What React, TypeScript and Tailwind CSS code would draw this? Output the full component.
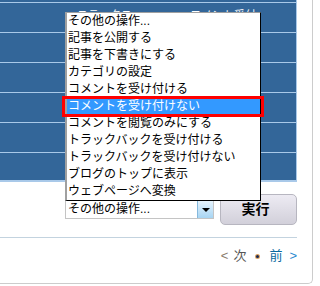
const menuItems = [
  'その他の操作...',
  '記事を公開する',
  '記事を下書きにする',
  'カテゴリの設定',
  'コメントを受け付ける',
  'コメントを受け付けない',
  'コメントを閲覧のみにする',
  'トラックバックを受け付ける',
  'トラックバックを受け付けない',
  'ブログのトップに表示',
  'ウェブページへ変換',
];

const SELECTED = 5;

export default function App() {
  return (
    <div className="relative w-[320px] h-[286px] overflow-hidden bg-white font-['Liberation_Sans','Noto_Sans_CJK_JP',sans-serif] text-black">
      <div className="w-[313px] h-[284px] border-r border-b border-[#cccccc] rounded-br-[5px]">
        <div className="w-[297px]">
          {/* entry table */}
          <div className="bg-[#336699] border-r border-[#a9c9e9] pt-[2px]">
            <div className="h-[30px] border-t border-[#a9c9e9] flex pt-[4px] text-[11px] text-white">
              <span className="ml-[77px]">ステータス</span>
              <span className="ml-[58px]">コメント受付</span>
            </div>
            <div className="h-[30px] border-t border-[#a9c9e9]" />
            <div className="h-[30px] border-t border-[#a9c9e9]" />
            <div className="h-[30px] border-t border-[#a9c9e9]" />
            <div className="h-[30px] border-t border-[#a9c9e9]" />
            <div className="h-[30px] border-t border-b-2 border-[#a9c9e9]" />
          </div>

          {/* bulk action */}
          <div className="flex items-center justify-end gap-[6px] mt-[12px]">
            <div className="flex w-[149px] h-[19px] border border-[#c4c4c4] bg-white">
              <span className="flex-1 pl-[2px] text-[12px] leading-[17px]">その他の操作...</span>
              <div className="w-[16px] h-full flex items-center justify-center border-l border-[#86b9dd] bg-linear-to-b from-[#e6f3fc] to-[#a7d5f3]">
                <div className="w-0 h-0 border-l-[4px] border-r-[4px] border-t-[4px] border-l-transparent border-r-transparent border-t-black" />
              </div>
            </div>
            <button className="w-[77px] h-[31px] rounded-[5px] border border-[#b7b6c0] bg-linear-to-b from-[#edebf3] to-[#d2d0da] text-[14px] font-bold pr-[6px]">
              実行
            </button>
          </div>

          <div className="mt-[12px] h-px bg-[#c3d3df]" />

          <div className="flex justify-end items-center gap-[5px] mt-[10px] text-[13px] leading-[16px]">
            <span className="text-[#8a7b6c]">&lt;</span>
            <span className="text-[#555555]">次</span>
            <span className="w-[3px] h-[3px] mx-[5px] bg-[#1a2a55] rounded-full ring-1 ring-[#d9a060]" />
            <span className="text-[#0a6aa0]">前</span>
            <span className="text-[#2a8ad0] ml-[2px]">&gt;</span>
          </div>
        </div>
      </div>

      {/* open dropdown list */}
      <div className="absolute left-[65px] top-[12px] w-[196px] bg-white border-l-2 border-t border-r border-b border-l-[#a0a0a0] border-t-[#a0a0a0] border-r-black border-b-black">
        {menuItems.map((item, i) => (
          <div
            key={item}
            className={
              i === SELECTED
                ? 'h-[17px] leading-[17px] pl-[1px] text-[12px] bg-[#3399ff] text-white'
                : 'h-[17px] leading-[17px] pl-[1px] text-[12px]'
            }
          >
            {item}
          </div>
        ))}
      </div>

      <div className="absolute left-[62px] top-[96px] w-[202px] h-[21px] border-[3px] border-[#ff0000]" />
    </div>
  );
}
